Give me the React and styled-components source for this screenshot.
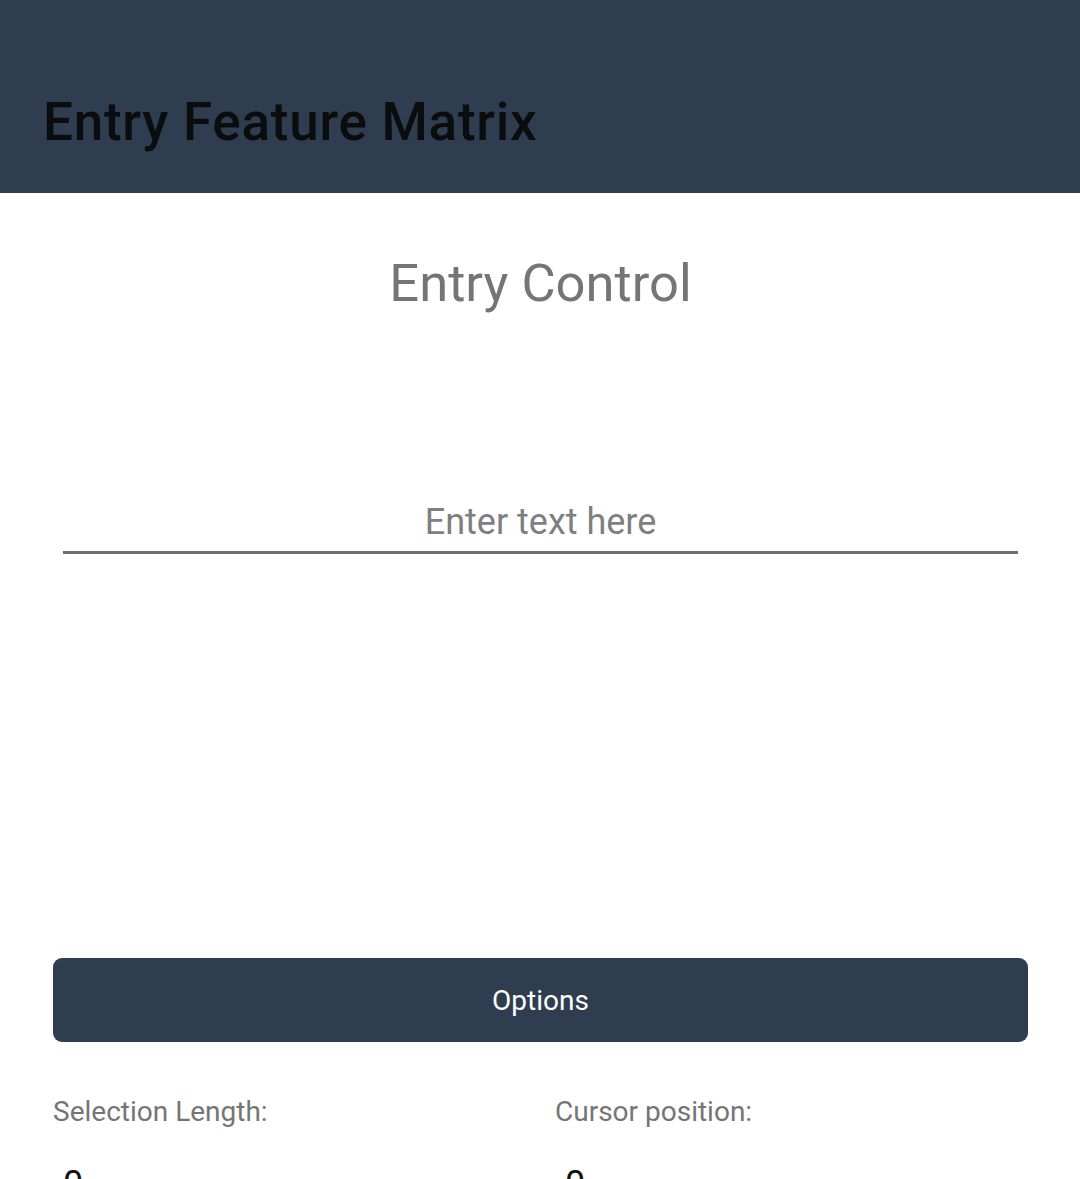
import React from 'react';
import styled, { createGlobalStyle } from 'styled-components';

const GlobalStyle = createGlobalStyle`
	html, body {
		margin: 0;
		padding: 0;
		background: #ffffff;
	}
	body {
		font-family: Roboto, 'Noto Sans', sans-serif;
	}
`;

const App = () => {
	return (
		<Page>
			<GlobalStyle />
			<TopBar>
				<TopTitle>Entry Feature Matrix</TopTitle>
			</TopBar>
			<Content>
				<SectionTitle>Entry Control</SectionTitle>
				<FieldWrap>
					<TextEntry placeholder="Enter text here" />
				</FieldWrap>
				<OptionsButton>Options</OptionsButton>
				<StatsGrid>
					<Stat>
						<StatLabel>Selection Length:</StatLabel>
						<StatValue>0</StatValue>
					</Stat>
					<Stat>
						<StatLabel>Cursor position:</StatLabel>
						<StatValue>0</StatValue>
					</Stat>
				</StatsGrid>
			</Content>
		</Page>
	);
};

export default App;

const Page = styled.div`
	width: 1080px;
	height: 1179px;
	overflow: hidden;
	background: #ffffff;
`;
const TopBar = styled.header`
	height: 193px;
	background: #2e3d50;
	display: flex;
	align-items: flex-end;
	padding: 0 43px 44px;
	box-sizing: border-box;
`;
const TopTitle = styled.h1`
	margin: 0;
	font-family: Roboto, sans-serif;
	font-weight: 500;
	font-size: 53px;
	line-height: 1;
	color: #0b0c0d;
	letter-spacing: 0.75px;
`;
const Content = styled.main`
	display: flex;
	flex-direction: column;
	padding: 0 52px 0 53px;
`;
const SectionTitle = styled.h2`
	margin: 58px 0 0;
	text-align: center;
	font-weight: 400;
	font-size: 52.5px;
	line-height: 64px;
	color: #757575;
`;
const FieldWrap = styled.div`
	margin: 185px 10px 0;
	border-bottom: 3px solid #6e6e6e;
`;
const TextEntry = styled.input`
	display: block;
	width: 100%;
	box-sizing: border-box;
	border: none;
	outline: none;
	background: transparent;
	text-align: center;
	font-family: Roboto, sans-serif;
	font-size: 36px;
	line-height: 44px;
	padding: 0 0 7px;
	color: #222;

	&::placeholder {
		color: #7f7f7f;
	}
`;
const OptionsButton = styled.button`
	margin-top: 404px;
	height: 84px;
	border: none;
	border-radius: 9px;
	background: #2e3d50;
	color: #ffffff;
	font-family: Roboto, sans-serif;
	font-size: 28px;
	cursor: pointer;
`;
const StatsGrid = styled.div`
	display: grid;
	grid-template-columns: 474px 1fr;
	gap: 28px;
	margin-top: 51px;
`;
const Stat = styled.div`
	display: flex;
	flex-direction: column;
`;
const StatLabel = styled.span`
	font-size: 28px;
	line-height: 38px;
	color: #757575;
`;
const StatValue = styled.span`
	margin-top: 31px;
	padding-left: 10px;
	font-size: 36px;
	line-height: 44px;
	color: #111;
`;
